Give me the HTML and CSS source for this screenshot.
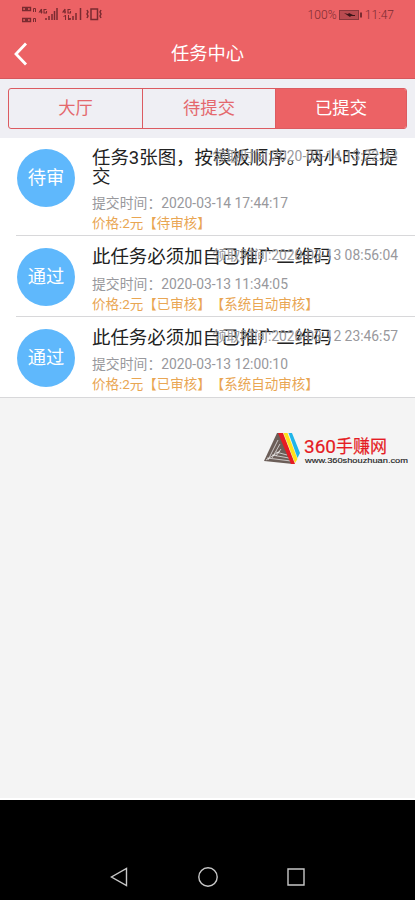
FILE: index.html
```html
<!DOCTYPE html>
<html lang="zh-CN">
<head>
<meta charset="utf-8">
<title>任务中心</title>
<link rel="stylesheet" href="styles.css">
</head>
<body>
<header class="header">
  <div class="status">
    <svg class="signals" width="82" height="20" viewBox="0 0 82 20" fill="none" stroke="#7a2b30">
      <path d="M.5 2.500h8v3h-8zM3 4h3M.5 13.500h8v3h-8zM3 15h3" stroke-width="1.400"/>
      <path d="M11.500 7V3.500h2V7M11.500 17v-3.500h2V17" stroke-width="1"/>
      <path d="M19.500 4l-2 3h3M19.500 4v4.500M24.500 4.500H22v3.500h2.500v-2M43 4l-2 3h3M43 4v4.500M48.500 4.500H46v3.500h2.500v-2" stroke-width="1.100"/>
      <path d="M24 13v2M27 11v4M30 9v6M32.500 6v9M35 3v12M48 13v2M51 11v4M54 8v7M58.500 3v12" stroke-width="1.500"/>
      <path d="M43.500 10v5M41.500 12l2-2M46.500 10v5M48.500 13l-2 2" stroke-width="1"/>
      <path d="M69 4h6.500v10.500H69z" stroke-width="1.500"/>
      <path d="M65 5l1 2-1 2 1 2-1 2M79 5l-1 2 1 2-1 2 1 2" stroke-width="1.500"/>
    </svg>
    <div class="power">
      <span class="percent">100%</span>
      <svg width="24" height="12" viewBox="0 0 24 12"><rect x=".5" y="1.500" width="19" height="9" fill="#b94b50" stroke="#8b363b"/><path d="M5 4l4 1 1-1 4 2h2v1h-4l-1 1-3-2z" fill="#3d1518"/><path d="M21 3.500h2v5h-2z" fill="#7a2b30"/></svg>
      <span class="clock">11:47</span>
    </div>
  </div>
  <div class="nav">
    <svg class="back" width="14" height="24" viewBox="0 0 14 24"><path d="M12 1.500 2 12l10 10.500" fill="none" stroke="#fff" stroke-width="2.800"/></svg>
    <h1 class="heading">任务中心</h1>
  </div>
</header>
<main class="main">
  <nav class="tabs">
    <a class="tab">大厅</a>
    <a class="tab">待提交</a>
    <a class="tab active">已提交</a>
  </nav>
  <section class="list">
    <article class="item tall">
      <div class="badge">待审</div>
      <div class="body">
        <h2 class="title">任务3张图，按模板顺序。两小时后提交</h2>
        <p class="time">提交时间：2020-03-14 17:44:17</p>
        <p class="price">价格:2元【待审核】</p>
        <span class="taken">领取时间:2020-03-14 13:22:43</span>
      </div>
    </article>
    <article class="item">
      <div class="badge">通过</div>
      <div class="body">
        <h2 class="title">此任务必须加自己推广二维码</h2>
        <p class="time">提交时间：2020-03-13 11:34:05</p>
        <p class="price">价格:2元【已审核】【系统自动审核】</p>
        <span class="taken">领取时间:2020-03-13 08:56:04</span>
      </div>
    </article>
    <article class="item">
      <div class="badge">通过</div>
      <div class="body">
        <h2 class="title">此任务必须加自己推广二维码</h2>
        <p class="time">提交时间：2020-03-13 12:00:10</p>
        <p class="price">价格:2元【已审核】【系统自动审核】</p>
        <span class="taken">领取时间:2020-03-12 23:46:57</span>
      </div>
    </article>
  </section>
  <div class="brand">
    <svg width="150" height="40" viewBox="0 0 150 40">
      <path d="M14 4 18 4 30 35 1 32z" fill="#6b5e58"/>
      <path d="M15 11 5 31M17 15 9 29M18 20 13 27M4 29l24 3M9 26l17 3M13 23l11 3M3 31l14-9" stroke="#f4f4f4" stroke-width=".7" fill="none"/>
      <path d="M15 4h5l12 31h-4z" fill="#e51b23"/>
      <path d="M20.500 4h4l10 26-2.500 4z" fill="#ffe11a"/>
      <path d="M25.500 4h3.500l8 20-2.500 5z" fill="#20b5e8"/>
      <text class="brand-name" x="41" y="23.500"><tspan class="brand-digits" textLength="32" lengthAdjust="spacingAndGlyphs">360</tspan><tspan x="73" textLength="51" lengthAdjust="spacingAndGlyphs">手赚网</tspan></text>
      <text class="brand-url" x="42" y="34" textLength="103" lengthAdjust="spacingAndGlyphs">www.360shouzhuan.com</text>
    </svg>
  </div>
</main>
<footer class="keys">
  <svg width="20" height="22" viewBox="0 0 20 22"><path d="M17.500 2.500v17L2.500 11z"/></svg>
  <svg width="22" height="22" viewBox="0 0 22 22"><circle cx="11" cy="11" r="9.200"/></svg>
  <svg width="20" height="22" viewBox="0 0 20 22"><path d="M2 3h16v16H2z"/></svg>
</footer>
</body>
</html>
```
FILE: styles.css
```css
* { box-sizing: border-box; }
body {
  margin: 0;
  width: 415px;
  height: 900px;
  display: flex;
  flex-direction: column;
  overflow: hidden;
  background: #f4f4f4;
  font-family: Roboto, "Noto Sans CJK SC", sans-serif;
  font-weight: 300;
  text-spacing-trim: space-all;
}
h1, h2, p { margin: 0; font-weight: inherit; }
.header {
  height: 79px;
  background: #ec6265;
  border-bottom: 1px solid #d6575d;
}
.status {
  height: 29px;
  padding: 5px 21px 0 22px;
  display: flex;
  justify-content: space-between;
}
.power {
  height: 20px;
  display: flex;
  align-items: center;
  gap: 2px;
  font-size: 12px;
  color: #7a2b30;
}
.percent { letter-spacing: .1px; }
.nav {
  height: 49px;
  padding: 0 14px;
  display: flex;
  align-items: center;
}
.heading {
  flex: 1;
  padding-right: 14px;
  text-align: center;
  font-size: 18.300px;
  font-weight: 400;
  line-height: 24px;
  color: #fff;
}
.main {
  height: 721px;
  padding-top: 9px;
  background: linear-gradient(#efeff4 59px, #f4f4f4 59px);
  border-bottom: 2px solid #fff;
}
.tabs {
  height: 41px;
  margin: 0 8px 9px;
  display: grid;
  grid-template-columns: 133px 133px 1fr;
  border: 1px solid #dc5b61;
  border-radius: 3px;
  overflow: hidden;
}
.tab {
  line-height: 38px;
  text-align: center;
  font-size: 17.300px;
  font-weight: 400;
  color: #e4686d;
}
.tab + .tab { border-left: 1px solid #dc5b61; }
.tab.active { background: #ec6265; color: #fff; }
.list { background: #fff; border-bottom: 1px solid #d8d8da; }
.item {
  height: 81px;
  margin-left: 16px;
  padding: 12px 17px 0 1px;
  display: flex;
  gap: 17px;
  border-bottom: 1px solid #d8d8da;
}
.item.tall { height: 98px; padding-top: 11px; }
.item:last-child { height: 80px; padding-top: 11.500px; border-bottom: 0; }
.badge {
  flex: none;
  width: 58px;
  height: 58px;
  border-radius: 50%;
  background: #5fb8fc;
  color: #fff;
  font-size: 18.300px;
  font-weight: 400;
  line-height: 57px;
  text-align: center;
}
.body { position: relative; flex: 1; }
.title {
  margin-right: -4px;
  font-size: 18.450px;
  font-weight: 400;
  line-height: 18.500px;
  color: #222;
}
.time {
  margin-top: 7px;
  font-size: 13.850px;
  font-weight: 400;
  line-height: 20px;
  color: #98989c;
}
.price {
  font-size: 13.500px;
  font-weight: 400;
  line-height: 20px;
  color: #e9a653;
  white-space: nowrap;
}
.taken {
  position: absolute;
  top: -3px;
  right: 0;
  font-size: 13.850px;
  font-weight: 400;
  line-height: 20px;
  color: #98989c;
  white-space: nowrap;
}
.brand { display: flex; justify-content: flex-end; padding: 31px 2px 0 0; }
.brand-name { font-family: Roboto, "Noto Sans CJK SC", sans-serif; font-size: 18px; font-weight: 400; fill: #e51b23; stroke: #e51b23; stroke-width: .2px; }
.brand-digits { font-size: 19px; }
.brand-url { font-family: "Liberation Sans", sans-serif; font-size: 8px; font-weight: 400; fill: #222; stroke: #222; stroke-width: .15px; }
.keys {
  flex: 1;
  padding: 66px 109px 0;
  display: flex;
  justify-content: space-between;
  background: #000;
}
.keys svg { fill: none; stroke: #c8c8c8; stroke-width: 1.400; }
```
